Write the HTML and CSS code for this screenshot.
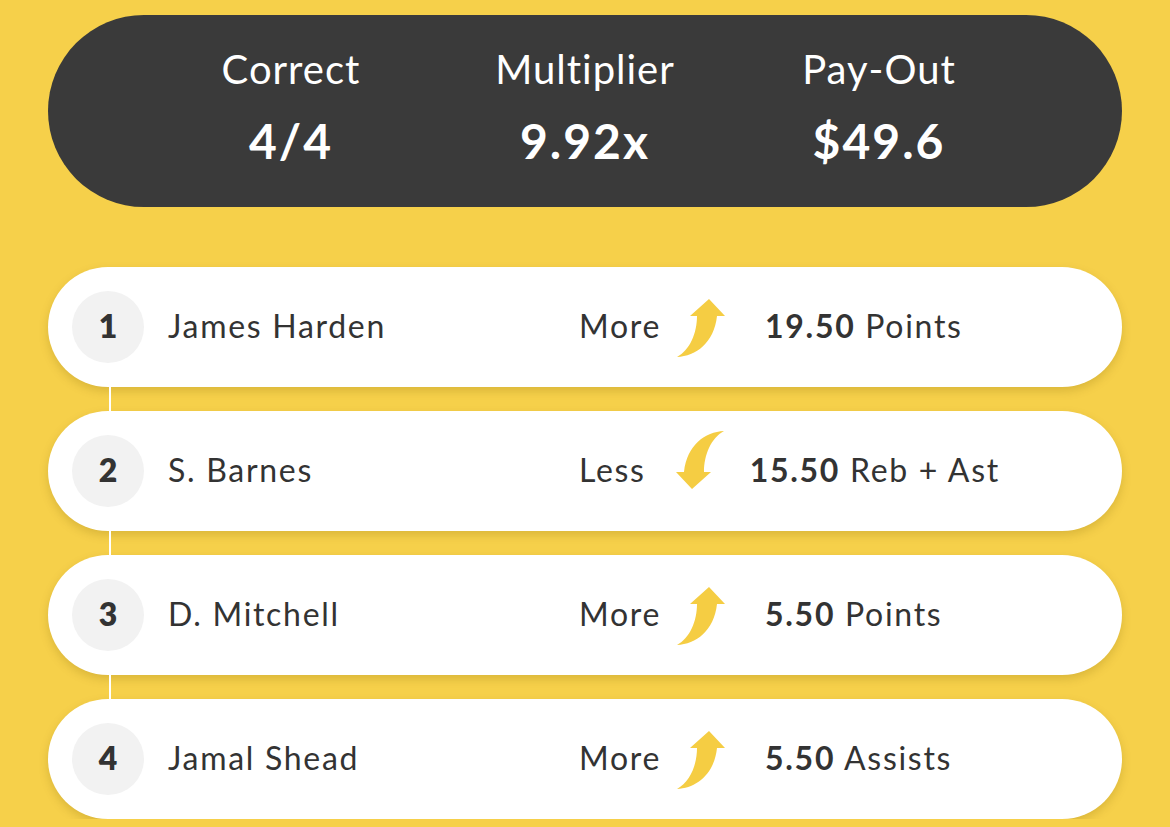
FILE: index.html
```html
<!DOCTYPE html>
<html lang="en">
<head>
  <meta charset="UTF-8">
  <meta name="viewport" content="width=device-width, initial-scale=1">
  <title>Pick Results</title>
  <link rel="stylesheet" href="styles.css">
</head>
<body>
  <div class="summary">
    <div class="stat">
      <span class="stat-label">Correct</span>
      <span class="stat-value">4/4</span>
    </div>
    <div class="stat">
      <span class="stat-label">Multiplier</span>
      <span class="stat-value">9.92x</span>
    </div>
    <div class="stat">
      <span class="stat-label">Pay-Out</span>
      <span class="stat-value">$49.6</span>
    </div>
  </div>

  <!-- arrow shape shared by every pick -->
  <svg width="0" height="0" class="defs">
    <defs>
      <path id="curve-arrow" d="M26 31 C26 48 19 65 6 72 C25 71 43 58 46 31 L54 31 L38 14 L19 31 Z"/>
    </defs>
  </svg>

  <div class="picks">
    <div class="pick">
      <span class="pick-num">1</span>
      <span class="pick-name">James Harden</span>
      <span class="pick-dir">More</span>
      <svg class="arrow" viewBox="0 0 74 74"><use href="#curve-arrow"/></svg>
      <span class="pick-line"><b>19.50</b> Points</span>
    </div>

    <div class="pick">
      <span class="pick-num">2</span>
      <span class="pick-name">S. Barnes</span>
      <span class="pick-dir">Less</span>
      <svg class="arrow" viewBox="0 0 74 74"><use href="#curve-arrow" transform="rotate(180 37 37)"/></svg>
      <span class="pick-line"><b>15.50</b> Reb + Ast</span>
    </div>

    <div class="pick">
      <span class="pick-num">3</span>
      <span class="pick-name">D. Mitchell</span>
      <span class="pick-dir">More</span>
      <svg class="arrow" viewBox="0 0 74 74"><use href="#curve-arrow"/></svg>
      <span class="pick-line"><b>5.50</b> Points</span>
    </div>

    <div class="pick">
      <span class="pick-num">4</span>
      <span class="pick-name">Jamal Shead</span>
      <span class="pick-dir">More</span>
      <svg class="arrow" viewBox="0 0 74 74"><use href="#curve-arrow"/></svg>
      <span class="pick-line"><b>5.50</b> Assists</span>
    </div>
  </div>
</body>
</html>
```

FILE: styles.css
```css
:root {
  --yellow: #f6d04a;
  --dark: #3a3a3a;
  --text: #333;
  --circle: #f2f2f2;
  --arrow: #f5cd43;
}

body {
  margin: 0;
  padding: 15px 48px 0;
  background-color: var(--yellow);
  font-family: 'Lato', 'Open Sans', sans-serif;
  color: var(--text);
  overflow: hidden;
}

.defs {
  position: absolute;
}

/* top summary pill */
.summary {
  box-sizing: border-box;
  height: 192px;
  padding-top: 30px;
  border-radius: 96px;
  background-color: var(--dark);
  color: #fff;
  display: flex;
  justify-content: center;
  align-items: flex-start;
}

.stat {
  width: 294px;
  display: flex;
  flex-direction: column;
  align-items: center;
}

.stat-label {
  font-size: 40px;
  font-weight: 400;
  line-height: 48px;
  letter-spacing: 1px;
}

.stat-value {
  font-size: 48px;
  font-weight: 700;
  line-height: 58px;
  margin-top: 19px;
  letter-spacing: 2px;
}

/* list of picks */
.picks {
  margin-top: 60px;
  display: flex;
  flex-direction: column;
  gap: 24px;
}

.pick {
  position: relative;
  height: 120px;
  border-radius: 60px;
  background-color: #fff;
  box-shadow: 0 4px 10px rgba(120, 90, 0, 0.22);
  display: flex;
  align-items: center;
  padding-left: 24px;
  font-size: 32px;
  line-height: 40px;
  letter-spacing: 1.7px;
}

.pick > span {
  margin-top: -2px;
}

/* connector between numbered circles */
.pick + .pick::before {
  content: "";
  position: absolute;
  left: 61px;
  top: -25px;
  width: 2px;
  height: 33px;
  background: linear-gradient(#fff 80%, rgba(255, 255, 255, 0.4));
  z-index: 1;
}

.pick > .pick-num {
  width: 72px;
  height: 72px;
  margin-top: 0;
  border-radius: 50%;
  background-color: var(--circle);
  display: flex;
  align-items: center;
  justify-content: center;
  font-weight: 800;
  font-size: 32px;
  line-height: 32px;
  padding-bottom: 3px;
  box-sizing: border-box;
  letter-spacing: 0;
  flex-shrink: 0;
}

.pick-name {
  width: 411px;
  margin-left: 24px;
  flex-shrink: 0;
}

.arrow {
  width: 74px;
  height: 74px;
  margin: 0 20px 11px 10px;
  fill: var(--arrow);
  flex-shrink: 0;
}

.pick-line b {
  font-weight: 700;
}
```
